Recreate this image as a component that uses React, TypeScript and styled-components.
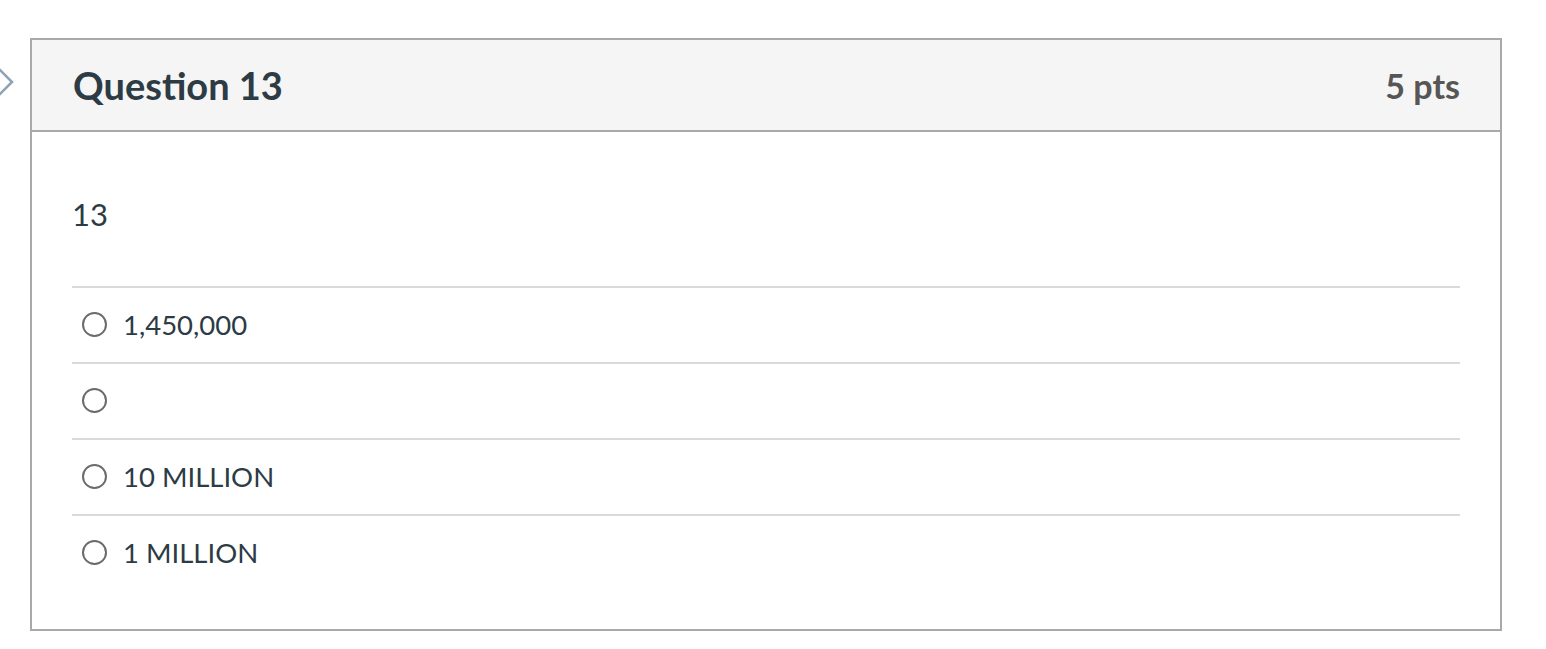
import styled, { createGlobalStyle } from 'styled-components';

const GlobalStyle = createGlobalStyle`
  html, body {
    margin: 0;
    padding: 0;
    background: #fff;
    font-family: Lato, "Liberation Sans", sans-serif;
    color: #2d3b45;
  }
`;

const answers = [
  { id: 1, text: '1,450,000' },
  { id: 2, text: '' },
  { id: 3, text: '10 MILLION' },
  { id: 4, text: '1 MILLION' },
];

export default function App() {
  return (
    <>
      <GlobalStyle />
      <Page>
        <Chevron width="14" height="34" viewBox="0 0 14 34" aria-hidden="true">
          <path d="M-4 1 L12 17 L-4 33" fill="none" stroke="#8ea3b6" strokeWidth="2.6" />
        </Chevron>
        <Card>
          <Header>
            <Title>Question 13</Title>
            <Points>5 pts</Points>
          </Header>
          <Body>
            <QuestionText>13</QuestionText>
            <AnswerList>
              {answers.map(({ id, text }) => (
                <Answer key={id}>
                  <Radio type="radio" name="q13" />
                  <AnswerLabel>{text}</AnswerLabel>
                </Answer>
              ))}
            </AnswerList>
          </Body>
        </Card>
      </Page>
    </>
  );
}

const Page = styled.div`
  display: flex;
  align-items: flex-start;
  padding-top: 38px;
`;

const Chevron = styled.svg`
  flex: none;
  margin-top: 27px;
  margin-right: 16px;
`;

const Card = styled.div`
  width: 1472px;
  box-sizing: border-box;
  border: 2px solid #a9a9a9;
  background: #fff;
`;

const Header = styled.div`
  display: flex;
  align-items: center;
  justify-content: space-between;
  height: 90px;
  padding: 0 40px 0 41px;
  background: #f5f5f5;
  border-bottom: 2px solid #a9a9a9;
`;

const Title = styled.h2`
  margin: 0;
  font-size: 38px;
  font-weight: 700;
  color: #2d3b45;
`;

const Points = styled.div`
  font-size: 34px;
  font-weight: 700;
  color: #565656;
`;

const Body = styled.div`
  padding: 59px 40px 39px 40px;
`;

const QuestionText = styled.div`
  font-size: 31px;
  line-height: 46px;
  color: #2d3b45;
  margin-bottom: 49px;
`;

const AnswerList = styled.div`
  display: flex;
  flex-direction: column;
`;

const Answer = styled.label`
  display: flex;
  align-items: center;
  height: 74px;
  box-sizing: content-box;
  padding-bottom: 0;
  border-top: 2px solid #dadada;

  & > * {
    position: relative;
    top: -1px;
  }
`;

const Radio = styled.input`
  appearance: none;
  margin: 0 0 0 10px;
  width: 25px;
  height: 25px;
  border: 2px solid #6b6b6b;
  border-radius: 50%;
  box-sizing: border-box;
  background: #fff;
  flex: none;
`;

const AnswerLabel = styled.span`
  margin-left: 16px;
  font-size: 27.5px;
  color: #2d3b45;
`;
